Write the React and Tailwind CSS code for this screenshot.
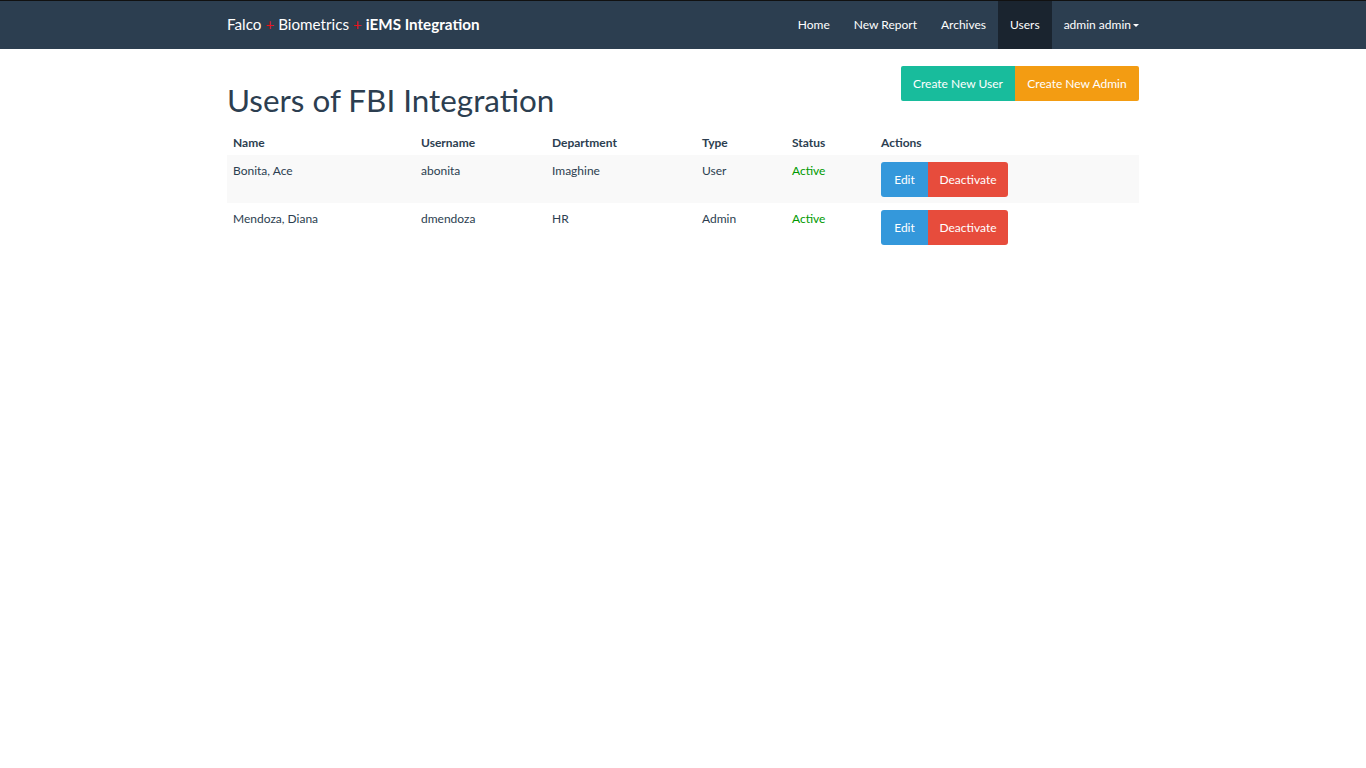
import React from 'react';

const users = [
  { name: 'Bonita, Ace', username: 'abonita', department: 'Imaghine', type: 'User', status: 'Active' },
  { name: 'Mendoza, Diana', username: 'dmendoza', department: 'HR', type: 'Admin', status: 'Active' },
];

const navLinks = ['Home', 'New Report', 'Archives', 'Users'];

const Navbar = () => (
  <nav className="bg-[#2c3e50] border-t border-t-[#111] h-[49px]">
    <div className="w-[912px] mx-auto flex items-stretch justify-between h-full">
      <div className="flex items-center text-[15.2px] text-white pb-[1px]">
        <span>Falco</span>
        <span className="text-[#e8141e] mx-[4px]">+</span>
        <span>Biometrics</span>
        <span className="text-[#e8141e] mx-[4px]">+</span>
        <span className="font-bold">iEMS Integration</span>
      </div>
      <ul className="flex items-stretch text-[12px] text-white">
        {navLinks.map(link => (
          <li
            key={link}
            className={`flex items-center px-[12px] ${link === 'Users' ? 'bg-[#1a242f]' : ''}`}
          >
            {link}
          </li>
        ))}
        <li className="flex items-center pl-[12px]">
          admin admin
          <span className="ml-[2px] inline-block w-0 h-0 border-l-[3px] border-r-[3px] border-t-[3px] border-l-transparent border-r-transparent border-t-white" />
        </li>
      </ul>
    </div>
  </nav>
);

export default function App() {
  return (
    <div className="min-h-screen bg-white font-['Lato',sans-serif] text-[#2c3e50]">
      <Navbar />
      <div className="w-[912px] mx-auto">
        <div className="flex justify-between items-start">
          <h1 className="text-[31.4px] leading-none mt-[36px] mb-[14px]">Users of FBI Integration</h1>
          <div className="flex mt-[17px] text-[12px] text-white">
            <button className="bg-[#18bc9c] w-[114px] h-[35px] rounded-l-[2px]">Create New User</button>
            <button className="bg-[#f39c12] w-[124px] h-[35px] rounded-r-[2px]">Create New Admin</button>
          </div>
        </div>
        <table className="w-full text-[12px] border-collapse">
          <thead>
            <tr className="h-[25px] text-left">
              <th className="w-[188px] px-[6px] pt-[4px] align-top font-bold">Name</th>
              <th className="w-[131px] px-[6px] pt-[4px] align-top font-bold">Username</th>
              <th className="w-[150px] px-[6px] pt-[4px] align-top font-bold">Department</th>
              <th className="w-[90px] px-[6px] pt-[4px] align-top font-bold">Type</th>
              <th className="w-[89px] px-[6px] pt-[4px] align-top font-bold">Status</th>
              <th className="px-[6px] pt-[4px] align-top font-bold">Actions</th>
            </tr>
          </thead>
          <tbody>
            {users.map((u, i) => (
              <tr key={u.username} className={i % 2 === 0 ? 'bg-[#f9f9f9]' : ''}>
                <td className="px-[6px] pt-[7px] align-top h-[48px]">{u.name}</td>
                <td className="px-[6px] pt-[7px] align-top">{u.username}</td>
                <td className="px-[6px] pt-[7px] align-top">{u.department}</td>
                <td className="px-[6px] pt-[7px] align-top">{u.type}</td>
                <td className="px-[6px] pt-[7px] align-top text-[#009900]">{u.status}</td>
                <td className="px-[6px] pt-[7px] align-top">
                  <div className="flex text-white">
                    <button className="bg-[#3498db] w-[47px] h-[35px] rounded-l-[3px]">Edit</button>
                    <button className="bg-[#e74c3c] w-[80px] h-[35px] rounded-r-[3px]">Deactivate</button>
                  </div>
                </td>
              </tr>
            ))}
          </tbody>
        </table>
      </div>
    </div>
  );
}
